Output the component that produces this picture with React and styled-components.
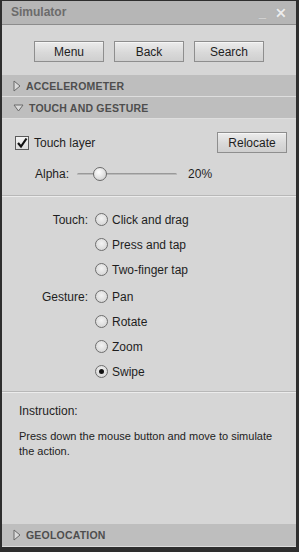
import React from "react";
import styled, { createGlobalStyle } from "styled-components";

const Global = createGlobalStyle`
  html, body { margin: 0; padding: 0; background: #2a2a2a; }
  body { font-family: "Liberation Sans", Arial, sans-serif; }
  * { box-sizing: border-box; }
`;

const Frame = styled.div`
  width: 299px;
  height: 552px;
  background: #2e2e2e;
  padding: 1px 3px 5px 2px;
  display: flex;
`;

const Panel = styled.div`
  flex: 1;
  min-width: 0;
  display: flex;
  flex-direction: column;
  background: #d6d6d6;
  border-bottom: 1px solid #dcdcdc;
`;

const TitleBar = styled.div`
  height: 24px;
  background: #b6b6b6;
  border-bottom: 1px solid #8c8c8c;
  display: flex;
  align-items: center;
  padding: 0 9px 0 9px;
`;

const Title = styled.div`
  flex: 1;
  font-weight: bold;
  font-size: 12px;
  color: #6b6b6b;
  padding-bottom: 2px;
`;

const TitleIcon = styled.span`
  color: #ececec;
  font-size: ${(p) => p.size || 12}px;
  font-weight: bold;
  margin-left: ${(p) => p.gap || 0}px;
  line-height: 1;
  text-shadow: 0 0 1px #999;
`;

const ButtonRow = styled.div`
  display: flex;
  justify-content: center;
  gap: 10px;
  padding: 16px 0 13px;
`;

const Button = styled.button`
  width: ${(p) => p.w || 70}px;
  height: 21px;
  border: 1px solid #8e8e8e;
  background: linear-gradient(#ececec, #d9d9d9 55%, #cfcfcf);
  font-family: "Liberation Sans", Arial, sans-serif;
  font-size: 12px;
  color: #1e1e1e;
  padding: 0;
  box-shadow: inset 0 1px 0 #f6f6f6;
`;

const Header = styled.div`
  height: 22px;
  background: #bebebe;
  display: flex;
  align-items: center;
  padding-left: 11px;
  gap: 5px;
  font-weight: bold;
  font-size: 10.5px;
  letter-spacing: 0.2px;
  color: #4e4e4e;
  border-bottom: 1px solid ${(p) => (p.last ? "#bebebe" : "#dedede")};
`;

const Body = styled.div`
  flex: 1;
  display: flex;
  flex-direction: column;
`;

const TopRow = styled.div`
  display: flex;
  align-items: center;
  justify-content: space-between;
  padding: 13px 9px 0 13px;
`;

const CheckLabel = styled.label`
  display: flex;
  align-items: center;
  gap: 5px;
  font-size: 12px;
  color: #1e1e1e;
`;

const Box = styled.span`
  width: 14px;
  height: 14px;
  border: 1px solid #5a5a5a;
  background: linear-gradient(#f4f4f4, #dcdcdc);
  display: flex;
  align-items: center;
  justify-content: center;
  overflow: visible;
`;

const AlphaRow = styled.div`
  display: flex;
  align-items: center;
  padding: 9px 0 0 33px;
  font-size: 12px;
  color: #1e1e1e;
  height: 33px;
`;

const Track = styled.div`
  position: relative;
  width: 100px;
  height: 3px;
  margin: 0 11px 0 8px;
  background: linear-gradient(#8a8a8a, #e8e8e8);
  border-radius: 2px;
`;

const Thumb = styled.span`
  position: absolute;
  top: -6px;
  width: 14px;
  height: 14px;
  border-radius: 50%;
  border: 1px solid #6a6a6a;
  background: radial-gradient(circle at 40% 35%, #ffffff, #d8d8d8 70%, #bdbdbd);
`;

const Divider = styled.div`
  height: 2px;
  border-top: 1px solid #b8b8b8;
  border-bottom: 1px solid #ececec;
  margin-top: ${(p) => p.mt || 0}px;
`;

const RadioGrid = styled.div`
  display: grid;
  grid-template-columns: 86px auto;
  column-gap: 7px;
  align-items: center;
  padding: 10px 0 7px;
`;

const GroupLabel = styled.div`
  text-align: right;
  font-size: 12px;
  color: #1e1e1e;
  height: ${(p) => p.h}px;
  display: flex;
  align-items: center;
  justify-content: flex-end;
  align-self: start;
  margin-top: ${(p) => p.mt || 0}px;
`;

const RadioRow = styled.div`
  display: flex;
  align-items: center;
  gap: 4px;
  height: 25px;
  font-size: 12px;
  color: #1e1e1e;
  margin-top: ${(p) => p.mt || 0}px;
`;

const RadioCircle = styled.span`
  width: 13px;
  height: 13px;
  border-radius: 50%;
  border: 1px solid #6e6e6e;
  background: radial-gradient(circle at 50% 40%, #f3f3f3, #dadada 70%, #c8c8c8);
  display: flex;
  align-items: center;
  justify-content: center;
  &::after {
    content: "";
    width: 5px;
    height: 5px;
    border-radius: 50%;
    background: ${(p) => (p.on ? "#111" : "transparent")};
  }
`;

const Instruction = styled.div`
  flex: 1;
  padding: 11px 15px 0 17px;
  font-size: 12px;
  color: #1e1e1e;
`;

const InstrText = styled.p`
  margin: 11px 0 0;
  font-size: 11px;
  line-height: 15px;
  color: #222;
`;

const TriRight = () => (
  <svg width="8" height="12" viewBox="0 0 8 12">
    <path d="M1 1 L7 6 L1 11 Z" fill="#dadada" stroke="#6a6a6a" strokeWidth="1" />
  </svg>
);

const TriDown = () => (
  <svg width="11" height="8" viewBox="0 0 11 8">
    <path d="M1 1 L10 1 L5.5 7 Z" fill="#dadada" stroke="#6a6a6a" strokeWidth="1" />
  </svg>
);

const Radio = ({ label, on, mt }) => (
  <RadioRow mt={mt}>
    <RadioCircle on={on} />
    {label}
  </RadioRow>
);

export default function App() {
  return (
    <>
      <Global />
      <Frame>
        <Panel>
          <TitleBar>
            <Title>Simulator</Title>
            <TitleIcon size={13}>_</TitleIcon>
            <TitleIcon size={14} gap={9}>✕</TitleIcon>
          </TitleBar>
          <ButtonRow>
            <Button>Menu</Button>
            <Button>Back</Button>
            <Button>Search</Button>
          </ButtonRow>
          <Header>
            <TriRight />
            ACCELEROMETER
          </Header>
          <Header>
            <TriDown />
            TOUCH AND GESTURE
          </Header>
          <Body>
            <TopRow>
              <CheckLabel>
                <Box>
                  <svg width="12" height="12" viewBox="0 0 12 12">
                    <path d="M2 6 L5 9.5 L10.5 1.5" fill="none" stroke="#111" strokeWidth="2.2" />
                  </svg>
                </Box>
                Touch layer
              </CheckLabel>
              <Button w={70}>Relocate</Button>
            </TopRow>
            <AlphaRow>
              Alpha:
              <Track>
                <Thumb style={{ left: `${20 - 4}px` }} />
              </Track>
              20%
            </AlphaRow>
            <Divider mt={9} />
            <RadioGrid>
              <GroupLabel h={25}>Touch:</GroupLabel>
              <div>
                <Radio label="Click and drag" />
                <Radio label="Press and tap" />
                <Radio label="Two-finger tap" />
              </div>
              <GroupLabel h={25} mt={2}>Gesture:</GroupLabel>
              <div>
                <Radio label="Pan" mt={2} />
                <Radio label="Rotate" />
                <Radio label="Zoom" />
                <Radio label="Swipe" on />
              </div>
            </RadioGrid>
            <Divider />
            <Instruction>
              Instruction:
              <InstrText>
                Press down the mouse button and move to simulate the action.
              </InstrText>
            </Instruction>
          </Body>
          <Header last>
            <TriRight />
            GEOLOCATION
          </Header>
        </Panel>
      </Frame>
    </>
  );
}
